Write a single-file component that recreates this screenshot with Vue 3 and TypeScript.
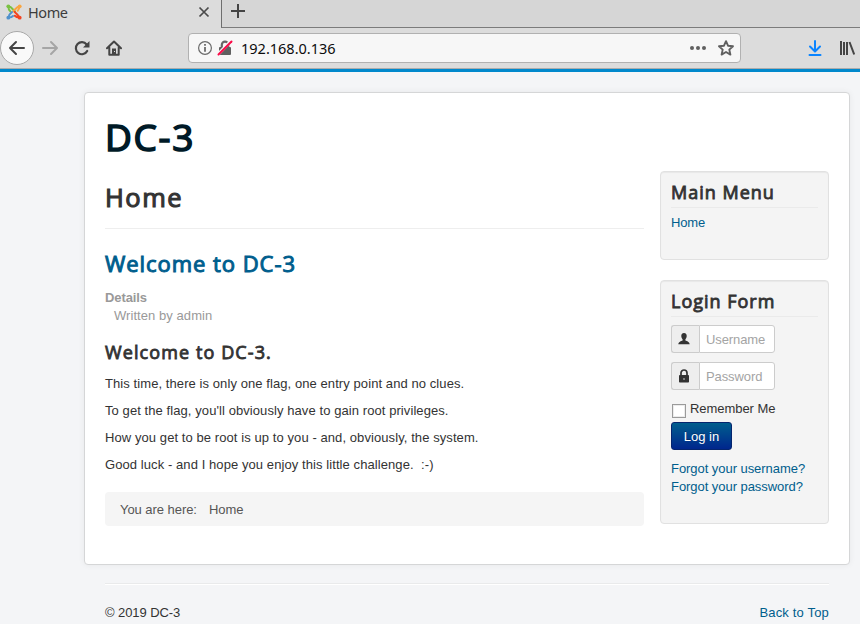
<script setup lang="ts">
import { ref } from 'vue'

const paragraphs: string[] = [
  'This time, there is only one flag, one entry point and no clues.',
  "To get the flag, you'll obviously have to gain root privileges.",
  'How you get to be root is up to you - and, obviously, the system.',
  'Good luck - and I hope you enjoy this little challenge.\u00a0 :-)',
]
const username = ref('')
const password = ref('')
const remember = ref(false)
</script>

<template>
  <div class="window">
    <header class="chrome">
      <div class="tabs">
        <div class="tab">
          <svg class="favicon" width="16" height="16" viewBox="0 0 16 16" fill="none" stroke-linecap="round" stroke-linejoin="round">
            <path d="M2.500 2.500 Q2.300 5.500 4.300 7.300 M3 2.500 Q4.800 2.800 5.800 4.200 L9 7.400" stroke="#7ac143" stroke-width="2" />
            <path d="M13.500 2.500 Q13.200 5.200 11.700 6.800 M13 2.500 Q11.500 2.800 10.500 4 L7.200 7.300" stroke="#f9a541" stroke-width="2" />
            <path d="M2.800 13.300 Q2.800 11 4.400 9.600 L6 8 M3 13.500 Q5.500 13.500 7 12" stroke="#5091cd" stroke-width="2" />
            <path d="M13.200 13.500 Q12.800 12 11.500 10.800 L8.600 7.900 M13 13.500 Q10.500 13.500 8.800 11.800" stroke="#f44321" stroke-width="2" />
            <circle cx="2.300" cy="2.300" r="1.900" fill="#7ac143" />
            <circle cx="13.700" cy="2.300" r="1.900" fill="#f9a541" />
            <circle cx="2.300" cy="13.700" r="1.900" fill="#5091cd" />
            <circle cx="13.700" cy="13.700" r="1.900" fill="#f44321" />
          </svg>
          <span class="tab-title">Home</span>
          <svg class="tab-close" width="12" height="12" viewBox="0 0 12 12" fill="none" stroke="#4a4a4a" stroke-width="1.700">
            <path d="M1.500 1.500 L10.500 10.500 M10.500 1.500 L1.500 10.500" />
          </svg>
        </div>
        <div class="tab-rest">
          <svg width="14" height="14" viewBox="0 0 14 14" fill="none" stroke="#444" stroke-width="2">
            <path d="M7 0 V14 M0 7 H14" />
          </svg>
        </div>
      </div>
      <div class="toolbar">
        <div class="back">
          <svg width="18" height="16" viewBox="0 0 18 16" fill="none" stroke="#454545" stroke-width="2" stroke-linecap="round" stroke-linejoin="round">
            <path d="M16 8 H2 M8 2 L2 8 L8 14" />
          </svg>
        </div>
        <svg class="forward" width="18" height="16" viewBox="0 0 18 16" fill="none" stroke="#a5a5a5" stroke-width="2" stroke-linecap="round" stroke-linejoin="round">
          <path d="M2 8 H15.500 M10 2 L16 8 L10 14" />
        </svg>
        <svg class="reload" width="16" height="16" viewBox="0 0 16 16" fill="none">
          <path d="M12.600 4.500 A6 6 0 1 0 13.200 11" stroke="#454545" stroke-width="2.200" stroke-linecap="round" />
          <path d="M15.500 1 V7.500 H9 Z" fill="#454545" />
        </svg>
        <svg class="house" width="16" height="16" viewBox="0 0 16 16" fill="none">
          <path d="M1 8.300 L8 1.500 L15 8.300 M3.300 7.500 V14.700 H12.700 V7.500" stroke="#454545" stroke-width="2" stroke-linejoin="round" stroke-linecap="round" />
          <path d="M6 8.500 H10 V15 H6 Z" fill="#454545" />
          <path d="M8 11 H9 V12 H8 Z" fill="#ddd" />
        </svg>
        <div class="address">
          <svg class="info" width="14" height="14" viewBox="0 0 14 14" fill="none">
            <circle cx="7" cy="7" r="6.400" stroke="#6a6a6a" stroke-width="1.200" />
            <path d="M7 6 V10.800 M7 3 V4.800" stroke="#6a6a6a" stroke-width="1.800" />
          </svg>
          <svg class="insecure" width="16" height="16" viewBox="0 0 16 16" fill="none">
            <path d="M4.800 8 V4.800 A3.200 3.200 0 0 1 11.200 4.800 V8" stroke="#666" stroke-width="2.200" />
            <rect x="2" y="7" width="12" height="8" rx="1" fill="#606060" />
            <path d="M1 14.300 L14 1" stroke="#f6f6f6" stroke-width="3.200" />
            <path d="M1.500 14.500 L14.500 1.500" stroke="#fb0a47" stroke-width="2" stroke-linecap="round" />
          </svg>
          <span class="url">192.168.0.136</span>
          <svg class="dots" width="16" height="4" viewBox="0 0 16 4" fill="#606060">
            <circle cx="2" cy="2" r="2" /><circle cx="8" cy="2" r="2" /><circle cx="14" cy="2" r="2" />
          </svg>
          <svg class="star" width="16" height="16" viewBox="0 0 16 16" fill="none" stroke="#606060" stroke-width="1.900" stroke-linejoin="round">
            <path d="M8 1.200 L10 5.700 L15 6.200 L11.300 9.600 L12.400 14.600 L8 12 L3.600 14.600 L4.700 9.600 L1 6.200 L6 5.700 Z" />
          </svg>
        </div>
        <svg class="download" width="14" height="16" viewBox="0 0 14 16" fill="none" stroke="#0a84ff" stroke-width="2" stroke-linecap="round" stroke-linejoin="round">
          <path d="M7 1 V11 M2 6.500 L7 11.500 L12 6.500 M1.500 15 H12.500" />
        </svg>
        <svg class="library" width="16" height="14" viewBox="0 0 16 14" fill="none" stroke="#454545" stroke-width="2">
          <path d="M2 0 V14 M5 1 V14 M8 1 V14 M10.500 1 L15.200 13.500" />
        </svg>
      </div>
    </header>

    <div class="site">
      <div class="sheet">
        <h1 class="site-title">DC-3</h1>
        <div class="columns">
          <main class="content">
            <div class="page-header"><h2>Home</h2></div>
            <h2 class="item-title"><a>Welcome to DC-3</a></h2>
            <dl class="details">
              <dt>Details</dt>
              <dd>Written by admin</dd>
            </dl>
            <h3 class="article-heading">Welcome to DC-3.</h3>
            <p v-for="line in paragraphs" :key="line">{{ line }}</p>
            <div class="breadcrumb"><span>You are here:</span><span>Home</span></div>
          </main>
          <aside class="sidebar">
            <section class="well menu">
              <h3>Main Menu</h3>
              <a>Home</a>
            </section>
            <section class="well login">
              <h3>Login Form</h3>
              <div class="field">
                <span class="addon">
                  <svg width="12" height="12" viewBox="0 0 12 12" fill="#333">
                    <path d="M6 0 C7.900 0 8.900 1.300 8.700 3.200 C8.600 4.500 8 5.500 7.400 6.200 V7.500 C9 8.200 11.500 8.700 11.700 11.300 H0.300 C0.500 8.700 3 8.200 4.600 7.500 V6.200 C4 5.500 3.400 4.500 3.300 3.200 C3.100 1.300 4.100 0 6 0 Z" />
                  </svg>
                </span>
                <input v-model="username" type="text" placeholder="Username" />
              </div>
              <div class="field">
                <span class="addon">
                  <svg width="12" height="14" viewBox="0 0 12 14" fill="none">
                    <path d="M3 7 V4 A3 3 0 0 1 9 4 V7" stroke="#333" stroke-width="1.700" />
                    <rect x="1" y="6" width="10" height="7.500" rx="0.800" fill="#333" />
                    <rect x="5.500" y="9" width="1" height="2" fill="#ccc" />
                  </svg>
                </span>
                <input v-model="password" type="password" placeholder="Password" />
              </div>
              <label class="remember"><input v-model="remember" type="checkbox" /><span>Remember Me</span></label>
              <button type="button">Log in</button>
              <div class="links">
                <a>Forgot your username?</a>
                <a>Forgot your password?</a>
              </div>
            </section>
          </aside>
        </div>
      </div>
      <footer class="footer">
        <span class="copyright">© 2019 DC-3</span>
        <a class="top-link">Back to Top</a>
      </footer>
    </div>
  </div>
</template>

<style>
body {
  overflow: hidden;
}
</style>

<style scoped>
.window {
  width: 860px;
  height: 624px;
  overflow: hidden;
  background: #f4f5f7;
  color: #333;
  font: 13px/18px "Liberation Sans", Arial, sans-serif;
  box-sizing: border-box;
}
.window *, .window *::before { box-sizing: border-box; }
svg { display: block; flex: none; }
h1, h2, h3, p, dl, dd { margin: 0; }
a { color: #005e8d; }
.chrome {
  height: 72px;
  background: #dcdcdc;
  border-bottom: 3px solid #0088cc;
  font-family: "Noto Sans", sans-serif;
}
.tabs { display: flex; height: 28px; }
.tab {
  width: 221px;
  height: 28px;
  padding: 0 11px 4px 6px;
  display: flex;
  align-items: center;
}
.tab-title { margin: -1px 0 0 6px; font-size: 14.5px; letter-spacing: -0.4px; color: #3c3c3c; }
.tab-close { margin-left: auto; }
.tab-rest {
  flex: 1;
  border-left: 1px solid #6e6e6e;
  border-bottom: 1px solid #7c7c7c;
  background: #d6d6d6;
  padding: 4px 0 0 9px;
}
.toolbar {
  height: 41px;
  display: flex;
  align-items: center;
  border-bottom: 1px solid #acacac;
}
.back {
  width: 34px;
  height: 34px;
  flex: none;
  border: 1px solid #a8a8a8;
  border-radius: 50%;
  background: #f9f9f9;
  display: flex;
  align-items: center;
  justify-content: center;
}
.forward { margin-left: 7px; }
.reload { margin-left: 15px; }
.house { margin-left: 16px; }
.address {
  width: 553px;
  height: 30px;
  margin-left: 66px;
  padding: 0 6px 0 9px;
  flex: none;
  display: flex;
  align-items: center;
  background: #f7f7f7;
  border: 1px solid #b1b1b1;
  border-radius: 4px;
}
.insecure { margin-left: 5px; }
.url { margin-left: 8px; font-size: 14.5px; color: #0c0c0d; }
.dots { margin-left: auto; }
.star { margin-left: 12px; }
.download { margin-left: 67px; }
.library { margin-left: 17px; }
.site { padding: 20px 10px 0 84px; }
.sheet {
  height: 473px;
  padding: 20px;
  background: #fff;
  border: 1px solid #d5d6d7;
  border-radius: 4px;
  box-shadow: 0 0 6px rgba(0, 0, 0, 0.06);
}
h1, h2, h3 {
  font-family: "Open Sans", sans-serif;
  font-weight: 400;
  white-space: nowrap;
  letter-spacing: 1px;
}
.site-title {
  height: 58px;
  font-size: 37px;
  line-height: 48px;
  letter-spacing: 1.7px;
  color: #001a27;
  -webkit-text-stroke: 1.600px #001a27;
}
.columns { display: flex; gap: 16px; }
.content { width: 539px; }
.page-header {
  height: 58px;
  padding-top: 8px;
  border-bottom: 1px solid #eee;
}
.page-header h2 { font-size: 25.5px; line-height: 36px; letter-spacing: 1.5px; -webkit-text-stroke: 1.100px #333; }
.item-title {
  margin-top: 16px;
  font-size: 22px;
  line-height: 36px;
  letter-spacing: 0.95px;
  -webkit-text-stroke: 1px #005e8d;
}
.details { margin-top: 8px; color: #999; }
.details dt { font-weight: 700; letter-spacing: -0.1px; }
.details dd { padding-left: 9px; letter-spacing: 0.06px; }
.article-heading { margin-top: 9px; letter-spacing: 1.1px; }
h3 { font-size: 18px; line-height: 36px; -webkit-text-stroke: 0.850px #333; }
.content p { margin-bottom: 9px; letter-spacing: 0.08px; }
.article-heading + p { margin-top: 5px; }
.breadcrumb {
  height: 34px;
  margin-top: 18px;
  padding: 9px 15px 7px;
  display: flex;
  gap: 12px;
  background: #f5f5f5;
  border-radius: 4px;
  color: #555;
  letter-spacing: -0.05px;
}
.sidebar { width: 169px; letter-spacing: -0.05px; }
.well {
  padding: 10px;
  background: #f4f4f4;
  border: 1px solid #e1e1e1;
  border-radius: 4px;
  box-shadow: inset 0 1px 1px rgba(0, 0, 0, 0.05);
}
.well h3 {
  height: 26px;
  line-height: 20px;
  margin-bottom: 6px;
  border-bottom: 1px solid #eaeaea;
}
.menu { height: 89px; margin-bottom: 20px; }
.login { height: 244px; }
.menu a { display: block; letter-spacing: -0.15px; }
.field { display: flex; width: 104px; height: 28px; margin-bottom: 9px; }
.login h3 { margin-bottom: 8px; }
.addon {
  width: 28px;
  height: 28px;
  padding: 0 6px;
  display: flex;
  align-items: center;
  background: #eee;
  border: 1px solid #ccc;
  border-right: 0;
  border-radius: 3px 0 0 3px;
}
.field input {
  width: 76px;
  height: 28px;
  padding: 0 6px;
  border: 1px solid #ccc;
  border-radius: 0 3px 3px 0;
  background: #fff;
  font: 13px "Liberation Sans", Arial, sans-serif;
  letter-spacing: -0.1px;
}
.field input::placeholder { color: #a4a4a4; opacity: 1; }
.remember { display: flex; height: 23px; }
.remember input {
  appearance: none;
  width: 14px;
  height: 14px;
  margin: 5px 4px 0 1px;
  border: 1px solid #9a9a9a;
  background: #fff;
  box-shadow: inset 0 0 0 1px #ececec;
}
.remember span { padding-top: 1px; }
button {
  display: block;
  width: 61px;
  height: 28px;
  padding: 0;
  border: 1px solid #05256e;
  border-radius: 3px;
  background: linear-gradient(#005e8d, #00268d);
  color: #fff;
  font: 13px "Liberation Sans", Arial, sans-serif;
  text-shadow: 0 -1px 0 rgba(0, 0, 0, 0.25);
}
.links { margin-top: 10px; display: grid; white-space: nowrap; }
.footer {
  height: 50px;
  margin: 18px 21px 0;
  padding-top: 20px;
  display: flex;
  justify-content: space-between;
  border-top: 1px solid #e9eaeb;
  box-shadow: inset 0 1px 0 #fff;
}
.copyright { letter-spacing: -0.08px; }
.top-link { letter-spacing: 0.17px; }
</style>
